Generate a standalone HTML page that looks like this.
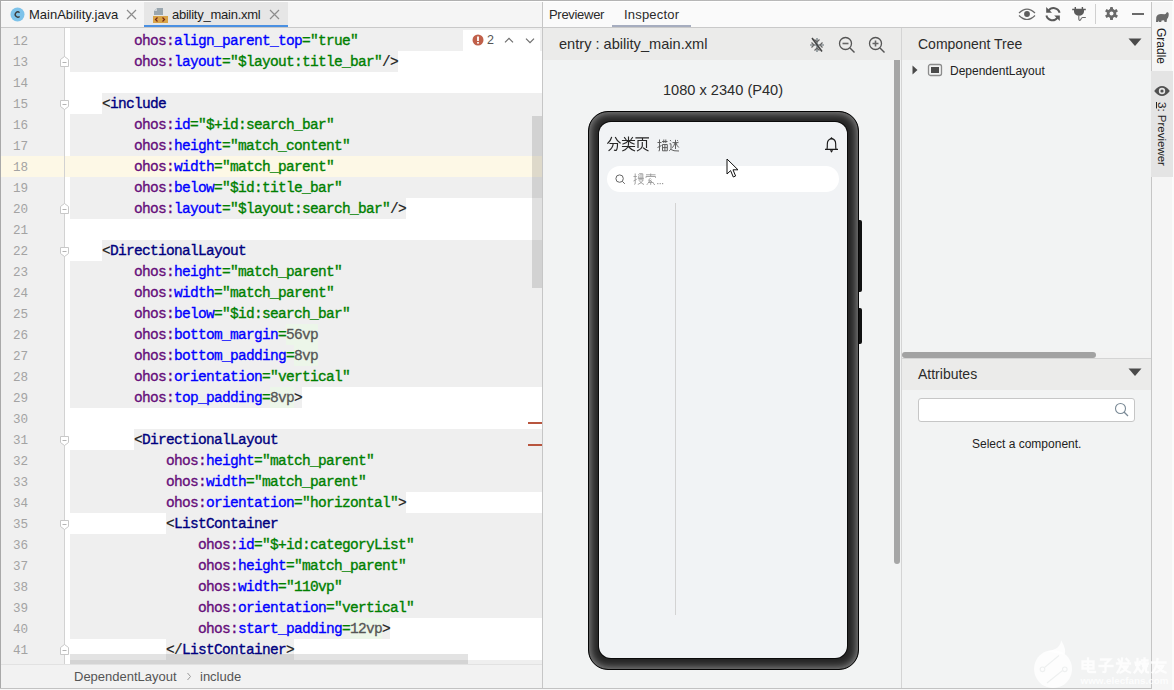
<!DOCTYPE html>
<html><head><meta charset="utf-8">
<style>
*{margin:0;padding:0;box-sizing:border-box}
html,body{width:1174px;height:690px;overflow:hidden;background:#f2f2f2;font-family:"Liberation Sans",sans-serif;color:#222}
.abs{position:absolute}
#root{position:relative;width:1174px;height:690px;overflow:hidden}
/* editor */
.gb{position:absolute;height:21px;background:#efefef}
.cur{position:absolute;left:1px;width:541px;height:21px;background:#fdf8e6}
.nb{position:absolute;height:21px;background:#ecf6e9}
.ln{position:absolute;left:0;width:28px;height:21px;line-height:21px;text-align:right;font-family:"Liberation Mono",monospace;font-size:12.6px;color:#a3a3a3;padding-top:2px}
.cl{position:absolute;left:70px;height:21px;line-height:21px;white-space:pre;font-family:"Liberation Mono",monospace;font-size:14.5px;letter-spacing:-0.7px;font-weight:normal;-webkit-text-stroke:0.35px currentColor;padding-top:1px}
.cl .p{color:#660e7a}
.cl .a{color:#0000ff}
.cl .v{color:#008000}
.cl .t{color:#000080}
.cl .s{color:#222;font-weight:normal;-webkit-text-stroke:0.2px #222}
.cl .n{color:#555;font-weight:normal;-webkit-text-stroke:0.3px #555}
.fold{position:absolute;left:60px}
.ui{font-family:"Liberation Sans",sans-serif;white-space:nowrap;position:absolute}
</style></head>
<body><div id="root">
<!-- outer borders -->

<div class="abs" style="left:0;top:0;width:1px;height:690px;background:#a9a9a9"></div>

<!-- ============ EDITOR ============ -->
<div class="abs" style="left:1px;top:1px;width:541px;height:26px;background:#f5f5f5"></div>
<div class="abs" style="left:144px;top:1px;width:144px;height:26px;background:#e6e6e6"></div>
<div class="abs" style="left:144px;top:25px;width:144px;height:2px;background:#4a90e2"></div>
<div class="abs" style="left:1px;top:27px;width:541px;height:1px;background:#c9c9c9"></div>
<!-- tab 1 -->
<svg class="abs" style="left:10px;top:7px" width="15" height="15" viewBox="0 0 15 15"><circle cx="7.5" cy="7.5" r="7" fill="#7ec3ea"/><path d="M9.6 5.6A2.6 2.6 0 1 0 9.6 9.4" fill="none" stroke="#3a3a3a" stroke-width="1.3"/></svg>
<div class="ui" style="left:29px;top:7px;font-size:13px;color:#1e1e1e">MainAbility.java</div>
<svg class="abs" style="left:126px;top:9px" width="11" height="11" viewBox="0 0 11 11"><path d="M1 1L10 10M10 1L1 10" stroke="#8c8c8c" stroke-width="1.2"/></svg>
<!-- tab 2 -->
<svg class="abs" style="left:152px;top:7px" width="17" height="17" viewBox="0 0 17 17"><path d="M5 1H11V8H2V4Z" fill="#9aa7b0"/><path d="M2 4L5 1V4Z" fill="#d0d6da"/><rect x="1" y="9" width="15" height="7" fill="#d9a448"/><path d="M5.5 10.5L3.5 12.5L5.5 14.5M10.5 10.5L12.5 12.5L10.5 14.5" fill="none" stroke="#7a2a14" stroke-width="1.2"/></svg>
<div class="ui" style="left:172px;top:7px;font-size:13px;color:#1e1e1e;letter-spacing:-0.25px">ability_main.xml</div>
<svg class="abs" style="left:269px;top:9px" width="11" height="11" viewBox="0 0 11 11"><path d="M1 1L10 10M10 1L1 10" stroke="#8c8c8c" stroke-width="1.2"/></svg>

<!-- editor body -->
<div class="abs" style="left:1px;top:28px;width:63px;height:636px;background:#f0f0f0"></div>
<div class="abs" style="left:64px;top:28px;width:1px;height:636px;background:#d2d2d2"></div>
<div class="abs" style="left:65px;top:28px;width:477px;height:636px;background:#ffffff"></div>
<div class="abs" style="left:0;top:28px;width:542px;height:636px;overflow:hidden"><div class="abs" style="left:0;top:-28px;width:542px;height:690px">
<div class="gb" style="top:9px;left:70px;width:472px"></div>
<div class="gb" style="top:30px;left:70px;width:472px"></div>
<div class="gb" style="top:51px;left:70px;width:328px"></div>
<div class="gb" style="top:93px;left:102px;width:440px"></div>
<div class="gb" style="top:114px;left:70px;width:472px"></div>
<div class="gb" style="top:135px;left:70px;width:472px"></div>
<div class="gb" style="top:177px;left:70px;width:472px"></div>
<div class="gb" style="top:198px;left:70px;width:336px"></div>
<div class="gb" style="top:240px;left:102px;width:440px"></div>
<div class="gb" style="top:261px;left:70px;width:472px"></div>
<div class="gb" style="top:282px;left:70px;width:472px"></div>
<div class="gb" style="top:303px;left:70px;width:472px"></div>
<div class="gb" style="top:324px;left:70px;width:472px"></div>
<div class="gb" style="top:345px;left:70px;width:472px"></div>
<div class="gb" style="top:366px;left:70px;width:472px"></div>
<div class="gb" style="top:387px;left:70px;width:232px"></div>
<div class="gb" style="top:429px;left:134px;width:408px"></div>
<div class="gb" style="top:450px;left:70px;width:472px"></div>
<div class="gb" style="top:471px;left:70px;width:472px"></div>
<div class="gb" style="top:492px;left:70px;width:336px"></div>
<div class="gb" style="top:513px;left:166px;width:376px"></div>
<div class="gb" style="top:534px;left:70px;width:472px"></div>
<div class="gb" style="top:555px;left:70px;width:472px"></div>
<div class="gb" style="top:576px;left:70px;width:472px"></div>
<div class="gb" style="top:597px;left:70px;width:472px"></div>
<div class="gb" style="top:618px;left:70px;width:320px"></div>
<div class="gb" style="top:639px;left:166px;width:128px"></div>
<div class="gb" style="top:660px;left:70px;width:472px"></div>
<div class="cur" style="top:156px"></div>
<div class="nb" style="top:324px;left:286px;width:32px"></div>
<div class="nb" style="top:345px;left:294px;width:24px"></div>
<div class="nb" style="top:387px;left:270px;width:24px"></div>
<div class="nb" style="top:618px;left:350px;width:32px"></div>
<div class="ln" style="top:30px">12</div>
<div class="ln" style="top:51px">13</div>
<div class="ln" style="top:72px">14</div>
<div class="ln" style="top:93px">15</div>
<div class="ln" style="top:114px">16</div>
<div class="ln" style="top:135px">17</div>
<div class="ln" style="top:156px">18</div>
<div class="ln" style="top:177px">19</div>
<div class="ln" style="top:198px">20</div>
<div class="ln" style="top:219px">21</div>
<div class="ln" style="top:240px">22</div>
<div class="ln" style="top:261px">23</div>
<div class="ln" style="top:282px">24</div>
<div class="ln" style="top:303px">25</div>
<div class="ln" style="top:324px">26</div>
<div class="ln" style="top:345px">27</div>
<div class="ln" style="top:366px">28</div>
<div class="ln" style="top:387px">29</div>
<div class="ln" style="top:408px">30</div>
<div class="ln" style="top:429px">31</div>
<div class="ln" style="top:450px">32</div>
<div class="ln" style="top:471px">33</div>
<div class="ln" style="top:492px">34</div>
<div class="ln" style="top:513px">35</div>
<div class="ln" style="top:534px">36</div>
<div class="ln" style="top:555px">37</div>
<div class="ln" style="top:576px">38</div>
<div class="ln" style="top:597px">39</div>
<div class="ln" style="top:618px">40</div>
<div class="ln" style="top:639px">41</div>
<div class="cl" style="top:30px">        <span class="p">ohos:</span><span class="a">align_parent_top</span><span class="v">=</span><span class="v">&quot;true&quot;</span></div>
<div class="cl" style="top:51px">        <span class="p">ohos:</span><span class="a">layout</span><span class="v">=</span><span class="v">&quot;$layout:title_bar&quot;</span><span class="s">/&gt;</span></div>
<div class="cl" style="top:93px">    <span class="s">&lt;</span><span class="t">include</span></div>
<div class="cl" style="top:114px">        <span class="p">ohos:</span><span class="a">id</span><span class="v">=</span><span class="v">&quot;$+id:search_bar&quot;</span></div>
<div class="cl" style="top:135px">        <span class="p">ohos:</span><span class="a">height</span><span class="v">=</span><span class="v">&quot;match_content&quot;</span></div>
<div class="cl" style="top:156px">        <span class="p">ohos:</span><span class="a">width</span><span class="v">=</span><span class="v">&quot;match_parent&quot;</span></div>
<div class="cl" style="top:177px">        <span class="p">ohos:</span><span class="a">below</span><span class="v">=</span><span class="v">&quot;$id:title_bar&quot;</span></div>
<div class="cl" style="top:198px">        <span class="p">ohos:</span><span class="a">layout</span><span class="v">=</span><span class="v">&quot;$layout:search_bar&quot;</span><span class="s">/&gt;</span></div>
<div class="cl" style="top:240px">    <span class="s">&lt;</span><span class="t">DirectionalLayout</span></div>
<div class="cl" style="top:261px">        <span class="p">ohos:</span><span class="a">height</span><span class="v">=</span><span class="v">&quot;match_parent&quot;</span></div>
<div class="cl" style="top:282px">        <span class="p">ohos:</span><span class="a">width</span><span class="v">=</span><span class="v">&quot;match_parent&quot;</span></div>
<div class="cl" style="top:303px">        <span class="p">ohos:</span><span class="a">below</span><span class="v">=</span><span class="v">&quot;$id:search_bar&quot;</span></div>
<div class="cl" style="top:324px">        <span class="p">ohos:</span><span class="a">bottom_margin</span><span class="v">=</span><span class="n">56vp</span></div>
<div class="cl" style="top:345px">        <span class="p">ohos:</span><span class="a">bottom_padding</span><span class="v">=</span><span class="n">8vp</span></div>
<div class="cl" style="top:366px">        <span class="p">ohos:</span><span class="a">orientation</span><span class="v">=</span><span class="v">&quot;vertical&quot;</span></div>
<div class="cl" style="top:387px">        <span class="p">ohos:</span><span class="a">top_padding</span><span class="v">=</span><span class="n">8vp</span><span class="s">&gt;</span></div>
<div class="cl" style="top:429px">        <span class="s">&lt;</span><span class="t">DirectionalLayout</span></div>
<div class="cl" style="top:450px">            <span class="p">ohos:</span><span class="a">height</span><span class="v">=</span><span class="v">&quot;match_parent&quot;</span></div>
<div class="cl" style="top:471px">            <span class="p">ohos:</span><span class="a">width</span><span class="v">=</span><span class="v">&quot;match_parent&quot;</span></div>
<div class="cl" style="top:492px">            <span class="p">ohos:</span><span class="a">orientation</span><span class="v">=</span><span class="v">&quot;horizontal&quot;</span><span class="s">&gt;</span></div>
<div class="cl" style="top:513px">            <span class="s">&lt;</span><span class="t">ListContainer</span></div>
<div class="cl" style="top:534px">                <span class="p">ohos:</span><span class="a">id</span><span class="v">=</span><span class="v">&quot;$+id:categoryList&quot;</span></div>
<div class="cl" style="top:555px">                <span class="p">ohos:</span><span class="a">height</span><span class="v">=</span><span class="v">&quot;match_parent&quot;</span></div>
<div class="cl" style="top:576px">                <span class="p">ohos:</span><span class="a">width</span><span class="v">=</span><span class="v">&quot;110vp&quot;</span></div>
<div class="cl" style="top:597px">                <span class="p">ohos:</span><span class="a">orientation</span><span class="v">=</span><span class="v">&quot;vertical&quot;</span></div>
<div class="cl" style="top:618px">                <span class="p">ohos:</span><span class="a">start_padding</span><span class="v">=</span><span class="n">12vp</span><span class="s">&gt;</span></div>
<div class="cl" style="top:639px">            <span class="s">&lt;/</span><span class="t">ListContainer</span><span class="s">&gt;</span></div>
<div class="abs" style="left:64px;top:28px;width:1px;height:636px;background:#d2d2d2"></div>
<svg class="fold" style="top:56px" width="10" height="12" viewBox="0 0 10 12"><path d="M0.5 10.5H8.5V3.5L4.5 0.5L0.5 3.5Z" fill="#fff" stroke="#c8c8c8"/><path d="M2.5 6.5H6.5" stroke="#b4b4b4"/></svg>
<svg class="fold" style="top:100px" width="10" height="12" viewBox="0 0 10 12"><path d="M0.5 0.5H8.5V6.5L4.5 9.5L0.5 6.5Z" fill="#fff" stroke="#c8c8c8"/><path d="M2.5 4.5H6.5" stroke="#b4b4b4"/></svg>
<svg class="fold" style="top:203px" width="10" height="12" viewBox="0 0 10 12"><path d="M0.5 10.5H8.5V3.5L4.5 0.5L0.5 3.5Z" fill="#fff" stroke="#c8c8c8"/><path d="M2.5 6.5H6.5" stroke="#b4b4b4"/></svg>
<svg class="fold" style="top:247px" width="10" height="12" viewBox="0 0 10 12"><path d="M0.5 0.5H8.5V6.5L4.5 9.5L0.5 6.5Z" fill="#fff" stroke="#c8c8c8"/><path d="M2.5 4.5H6.5" stroke="#b4b4b4"/></svg>
<svg class="fold" style="top:436px" width="10" height="12" viewBox="0 0 10 12"><path d="M0.5 0.5H8.5V6.5L4.5 9.5L0.5 6.5Z" fill="#fff" stroke="#c8c8c8"/><path d="M2.5 4.5H6.5" stroke="#b4b4b4"/></svg>
<svg class="fold" style="top:520px" width="10" height="12" viewBox="0 0 10 12"><path d="M0.5 0.5H8.5V6.5L4.5 9.5L0.5 6.5Z" fill="#fff" stroke="#c8c8c8"/><path d="M2.5 4.5H6.5" stroke="#b4b4b4"/></svg>
<svg class="fold" style="top:644px" width="10" height="12" viewBox="0 0 10 12"><path d="M0.5 10.5H8.5V3.5L4.5 0.5L0.5 3.5Z" fill="#fff" stroke="#c8c8c8"/><path d="M2.5 6.5H6.5" stroke="#b4b4b4"/></svg>
</div></div>
<!-- error widget -->
<div class="abs" style="left:463px;top:30px;width:77px;height:21px;background:#ffffff"></div>
<svg class="abs" style="left:472px;top:34px" width="12" height="12" viewBox="0 0 12 12"><circle cx="6" cy="6" r="5.5" fill="#c0604a"/><rect x="5.1" y="2.5" width="1.8" height="4.5" fill="#fff"/><rect x="5.1" y="8" width="1.8" height="1.6" fill="#fff"/></svg>
<div class="ui" style="left:487px;top:33px;font-size:12.5px;color:#555">2</div>
<svg class="abs" style="left:503px;top:36px" width="12" height="8" viewBox="0 0 12 8"><path d="M2 6.3L6 2.3L10 6.3" fill="none" stroke="#6e6e6e" stroke-width="1.2"/></svg>
<svg class="abs" style="left:524px;top:37px" width="12" height="8" viewBox="0 0 12 8"><path d="M2 1.7L6 5.7L10 1.7" fill="none" stroke="#6e6e6e" stroke-width="1.2"/></svg>
<!-- vertical scrollbar -->
<div class="abs" style="left:532px;top:116px;width:10px;height:172px;background:rgba(0,0,0,0.12)"></div>
<!-- error stripes -->
<div class="abs" style="left:528px;top:422px;width:14px;height:2px;background:#b8553e"></div>
<div class="abs" style="left:528px;top:444px;width:14px;height:2px;background:#b8553e"></div>
<!-- horizontal scrollbar -->
<div class="abs" style="left:70px;top:654px;width:398px;height:10px;background:rgba(0,0,0,0.11)"></div>
<!-- breadcrumb -->
<div class="abs" style="left:1px;top:664px;width:541px;height:1px;background:#e2e2e2"></div>
<div class="abs" style="left:1px;top:665px;width:541px;height:23px;background:#f2f2f2"></div>
<div class="ui" style="left:74px;top:669px;font-size:13px;color:#555">DependentLayout</div>
<svg class="abs" style="left:186px;top:672px" width="6" height="9" viewBox="0 0 6 9"><path d="M1.5 1L4.5 4.5L1.5 8" fill="none" stroke="#9a9a9a" stroke-width="1"/></svg>
<div class="ui" style="left:200px;top:669px;font-size:13px;color:#555">include</div>
<div class="abs" style="left:0;top:688px;width:1152px;height:1px;background:#c2c2c2"></div>
<div class="abs" style="left:0;top:689px;width:1174px;height:1px;background:#f7f7f7"></div>

<!-- divider editor/previewer -->
<div class="abs" style="left:542px;top:0;width:1px;height:688px;background:#c6c6c6"></div>

<!-- ============ PREVIEWER ============ -->
<div class="abs" style="left:543px;top:1px;width:608px;height:26px;background:#fafafa"></div>
<div class="abs" style="left:543px;top:27px;width:608px;height:1px;background:#c9c9c9"></div>
<div class="ui" style="left:549px;top:7px;font-size:13px;color:#2a2a2a;letter-spacing:-0.3px">Previewer</div>
<div class="ui" style="left:624px;top:7px;font-size:13px;color:#2a2a2a;letter-spacing:0.2px">Inspector</div>
<div class="abs" style="left:612px;top:25px;width:79px;height:2px;background:#a6adbf"></div>
<!-- right top icons -->
<svg class="abs" style="left:1017px;top:6px" width="20" height="16" viewBox="0 0 20 16"><path d="M2 7Q10 -1 18 7M2 9.5Q10 17.5 18 9.5" fill="none" stroke="#6a6a6a" stroke-width="1.2"/><circle cx="10" cy="8" r="2.9" fill="#5e5e5e"/></svg>
<svg class="abs" style="left:1044px;top:5px" width="18" height="18" viewBox="0 0 18 18"><g fill="none" stroke="#5a5a5a" stroke-width="2"><path d="M4.5 5.8A6.2 6.2 0 0 1 15.6 7.8"/><path d="M2.4 10.6A6.2 6.2 0 0 0 13.5 12.6"/></g><g fill="#5a5a5a"><path d="M2.2 2V7.8H8Z"/><path d="M15.8 16V10.4H10.2Z"/></g></svg>
<svg class="abs" style="left:1071px;top:5px" width="16" height="17" viewBox="0 0 16 17"><g stroke="#5a5a5a" stroke-width="1.4" fill="none"><path d="M1.2 4.5H14.8M4.3 2V4.5M11.4 2V4.5"/></g><path d="M3 4.5H13V6.5A5 4.3 0 0 1 3 6.5Z" fill="#5a5a5a"/><path d="M7.8 10.5V14Q8 16 9.5 15Q10.5 12.5 11.5 12.5H14.8" fill="none" stroke="#6a6a6a" stroke-width="1.1"/></svg>
<div class="abs" style="left:1095px;top:4px;width:1px;height:20px;background:#d0d0d0"></div>
<svg class="abs" style="left:1104px;top:6px" width="15" height="15" viewBox="0 0 16 16"><g fill="#6a6a6a"><circle cx="8" cy="8" r="5"/><rect x="6.4" y="1" width="3.2" height="14" rx="0.5"/><rect x="6.4" y="1" width="3.2" height="14" rx="0.5" transform="rotate(60 8 8)"/><rect x="6.4" y="1" width="3.2" height="14" rx="0.5" transform="rotate(120 8 8)"/></g><circle cx="8" cy="8" r="2.1" fill="#fafafa"/></svg>
<div class="abs" style="left:1132px;top:13px;width:12px;height:2px;background:#6a6a6a"></div>

<!-- toolbar -->
<div class="abs" style="left:543px;top:28px;width:358px;height:32px;background:#ebebea"></div>
<div class="ui" style="left:559px;top:36px;font-size:14.6px;color:#2b2b2b">entry : ability_main.xml</div>
<svg class="abs" style="left:807px;top:35px" width="20" height="20" viewBox="0 0 20 20"><path d="M10 3V17M3 10H17" stroke="#8e979b" stroke-width="1.7"/><g fill="none" stroke="#666" stroke-width="1.2"><path d="M7.5 4.5L10 7L12.5 4.5M7.5 15.5L10 13L12.5 15.5M4.5 7.5L7 10L4.5 12.5M15.5 7.5L13 10L15.5 12.5"/></g><path d="M5 3L15 16.5" stroke="#454545" stroke-width="1.6"/></svg>
<svg class="abs" style="left:838px;top:36px" width="18" height="18" viewBox="0 0 18 18"><circle cx="7.5" cy="7.5" r="6" fill="none" stroke="#555" stroke-width="1.3"/><path d="M12 12L16.5 16.5" stroke="#555" stroke-width="1.4"/><path d="M4.5 7.5H10.5" stroke="#666" stroke-width="1.6"/></svg>
<svg class="abs" style="left:868px;top:36px" width="18" height="18" viewBox="0 0 18 18"><circle cx="7.5" cy="7.5" r="6" fill="none" stroke="#555" stroke-width="1.3"/><path d="M12 12L16.5 16.5" stroke="#555" stroke-width="1.4"/><path d="M4.5 7.5H10.5M7.5 4.5V10.5" stroke="#666" stroke-width="1.6"/></svg>

<!-- preview content -->
<div class="abs" style="left:543px;top:60px;width:358px;height:628px;background:#f2f3f3"></div>
<div class="abs" style="left:894px;top:60px;width:6px;height:504px;background:#a6a6a6;border-radius:0 0 3px 3px"></div>
<div class="ui" style="left:663px;top:82px;font-size:14.6px;color:#2b2b2b">1080 x 2340 (P40)</div>

<!-- phone -->
<div class="abs" style="left:858px;top:220px;width:4px;height:72px;background:#111;border-radius:0 2px 2px 0"></div>
<div class="abs" style="left:858px;top:308px;width:4px;height:36px;background:#111;border-radius:0 2px 2px 0"></div>
<div class="abs" style="left:588px;top:111px;width:271px;height:559px;border-radius:20px;background:#252525;border:1px solid #050505;box-shadow:inset 0 0 8px 1px rgba(150,150,150,1)"></div>
<div class="abs" style="left:599px;top:122px;width:248px;height:536px;border-radius:12px;background:#f1f3f5;box-shadow:0 0 0 1px #0a0a0a"></div>
<!-- screen content -->
<svg class="abs" style="left:607px;top:136px" width="42" height="16" viewBox="0 0 42 16">
 <g fill="none" stroke="#262626" stroke-width="1.15" stroke-linecap="square">
  <!-- 分 -->
  <path d="M4.5 1.5Q3.5 5 0.8 7.2M8.5 1.5Q10 5 13.2 7"/>
  <path d="M3 7.5H10.5Q10.5 12.5 9.5 14Q8.8 14.6 7.5 14.2"/>
  <path d="M6.2 7.8Q5.8 12 2 14.5"/>
  <!-- 类 -->
  <path d="M15.5 4.5H27.5M21.5 1V8M17.5 1.5L19 3.5M25.5 1.5L24 3.5M21 5Q19.5 7 16 8M22 5Q23.5 7 27 8"/>
  <path d="M15.5 10.5H27.5M21.5 8.5Q21 13 15.8 14.8M21.8 11Q24 13.5 27.5 14.8"/>
  <!-- 页 -->
  <path d="M29 1.8H41.5M35.5 2V4.3"/>
  <path d="M31 4.5H39.5V11.5M31 4.5V11.5M35.3 6.5V10Q35 12.5 30.5 14.8M36.5 12Q38.5 13.5 41 14.8"/>
 </g>
</svg>
<svg class="abs" style="left:657px;top:139px" width="23" height="13" viewBox="0 0 23 13">
 <g fill="none" stroke="#5a5a5a" stroke-width="0.95">
  <!-- 描 -->
  <path d="M0.5 3.5H4.5M2.5 0.5V11.5Q2.5 12.3 1.5 11.8M0.5 8.5L4.5 6.5"/>
  <path d="M5 2.5H10.5M6.8 0.5V4M8.8 0.5V4M5.5 5.5H10.3V11.8H5.5ZM5.5 8.6H10.3M7.9 5.5V11.8"/>
  <!-- 述 -->
  <path d="M13 1L14 2.2M12.5 4.8H14V10Q13.2 11.2 12.2 11.8M14 10.5Q16 12.2 22 12"/>
  <path d="M15.5 3.6H21.5M18.5 0.8V10M18 4Q17 7 15.2 8.8M19 4Q20 7 21.8 8.5M20.3 1.2L21 2.2"/>
 </g>
</svg>
<svg class="abs" style="left:824px;top:136px" width="16" height="18" viewBox="0 0 16 18"><path d="M5.8 3L7.5 1L9.2 3Z" fill="#1a1a1a"/><path d="M3 13.4Q3.4 11 3.3 8.3Q3.3 2.9 7.5 2.9Q11.7 2.9 11.7 8.3Q11.6 11 12 13.4M1 13.4H14" fill="none" stroke="#1a1a1a" stroke-width="1.15"/><path d="M5.8 14.2H9.2L7.5 16.8Z" fill="#1a1a1a"/></svg>
<div class="abs" style="left:607px;top:166px;width:232px;height:26px;border-radius:13px;background:#ffffff"></div>
<svg class="abs" style="left:615px;top:174px" width="11" height="11" viewBox="0 0 11 11"><circle cx="4.6" cy="4.6" r="3.7" fill="none" stroke="#666" stroke-width="1"/><path d="M7.3 7.3L9.8 9.8" stroke="#666" stroke-width="1"/></svg>
<svg class="abs" style="left:633px;top:173px" width="31" height="12" viewBox="0 0 31 12">
 <g fill="none" stroke="#9a9a9a" stroke-width="0.9">
  <!-- 搜 -->
  <path d="M0.5 3.5H3.8M2.2 0.5V10.8Q2.2 11.5 1.3 11.2M0.5 8L3.8 6.2"/>
  <path d="M5 1.5L6.5 2.5M6 0.8H9.8V5.3H5.8V3M8 0.5V5.5M4.8 5.3H11"/>
  <path d="M5.5 6.8H10.3Q9 10 4.8 11.5M6.2 7.5Q8 10.5 11 11.5"/>
  <!-- 索 -->
  <path d="M13 1.8H22.5M17.7 0.5V3.2M13 4.8V3.5H22.5V4.8M17.5 5L15.5 7.3L19 8.7M18.5 6.8L15 9.5H20.5M17.7 9.2V11.8M15.3 10.3L13.5 11.8M20 10.3L22 11.8"/>
 </g>
 <g fill="#9a9a9a"><rect x="24.2" y="10" width="1.2" height="1.2"/><rect x="26.6" y="10" width="1.2" height="1.2"/><rect x="29" y="10" width="1.2" height="1.2"/></g>
</svg>
<div class="abs" style="left:675px;top:203px;width:1px;height:412px;background:#d3d3d3"></div>
<!-- cursor -->
<svg class="abs" style="left:726px;top:158px" width="14" height="21" viewBox="0 0 14 21"><path d="M1 1V16L4.6 12.6L7.3 19L9.6 18L7 11.8H12Z" fill="#fff" stroke="#111" stroke-width="1" stroke-linejoin="round"/></svg>

<!-- divider previewer/right panel -->
<div class="abs" style="left:901px;top:28px;width:1px;height:660px;background:#d4d4d4"></div>

<!-- ============ RIGHT PANEL ============ -->
<div class="abs" style="left:902px;top:28px;width:249px;height:32px;background:#ebebea"></div>
<div class="ui" style="left:918px;top:36px;font-size:14px;color:#2b2b2b">Component Tree</div>
<svg class="abs" style="left:1128px;top:38px" width="14" height="9" viewBox="0 0 14 9"><path d="M0.5 0.5H13.5L7 8Z" fill="#4a4a4a"/></svg>
<div class="abs" style="left:902px;top:60px;width:249px;height:292px;background:#f2f3f3"></div>
<svg class="abs" style="left:911px;top:64px" width="8" height="12" viewBox="0 0 8 12"><path d="M1.5 1.5L6.5 6L1.5 10.5Z" fill="#4a4a4a"/></svg>
<svg class="abs" style="left:927px;top:63px" width="16" height="14" viewBox="0 0 16 14"><rect x="1.5" y="1.5" width="13" height="11" rx="2" fill="none" stroke="#8c8c8c" stroke-width="1.3"/><rect x="4" y="4" width="8" height="6" fill="#4a4a4a"/></svg>
<div class="ui" style="left:950px;top:64px;font-size:12px;color:#222">DependentLayout</div>
<div class="abs" style="left:902px;top:352px;width:194px;height:6px;border-radius:3px;background:#a2a2a2"></div>
<div class="abs" style="left:902px;top:358px;width:249px;height:1px;background:#d4d4d4"></div>
<div class="abs" style="left:902px;top:359px;width:249px;height:31px;background:#ebebea"></div>
<div class="ui" style="left:918px;top:366px;font-size:14px;color:#2b2b2b">Attributes</div>
<svg class="abs" style="left:1128px;top:368px" width="14" height="9" viewBox="0 0 14 9"><path d="M0.5 0.5H13.5L7 8Z" fill="#4a4a4a"/></svg>
<div class="abs" style="left:902px;top:390px;width:249px;height:298px;background:#f2f3f3"></div>
<div class="abs" style="left:918px;top:398px;width:217px;height:24px;border-radius:3px;background:#fff;border:1px solid #c6c6c6"></div>
<svg class="abs" style="left:1113px;top:401px" width="17" height="17" viewBox="0 0 17 17"><circle cx="7.5" cy="7.5" r="5" fill="none" stroke="#7a8a96" stroke-width="1.1"/><path d="M11 11L15 15" stroke="#7a8a96" stroke-width="1.2"/></svg>
<div class="ui" style="left:972px;top:437px;font-size:12px;color:#222">Select a component.</div>
<div class="abs" style="left:1151px;top:0;width:1px;height:689px;background:#c6c6c6"></div>

<!-- ============ RIGHT SIDEBAR ============ -->
<div class="abs" style="left:1152px;top:1px;width:20px;height:689px;background:#f5f5f5"></div>

<div class="abs" style="left:1172px;top:0;width:2px;height:690px;background:#fbfbfb"></div>
<div class="abs" style="left:1151px;top:71px;width:22px;height:106px;background:#e4e4e4"></div>
<div class="abs" style="left:0;top:0;width:1173px;height:1px;background:linear-gradient(90deg,#a9a9a9,#b3b3b3 50%,#c4c4c4)"></div>
<div class="abs" style="left:1px;top:1px;width:1172px;height:1px;background:#ffffff"></div>
<svg class="abs" style="left:1153px;top:10px" width="18" height="14" viewBox="0 0 18 14"><path d="M3 12L3.3 7Q4.3 4 8 4L11.8 4.3Q13.2 4 13.3 2.8Q13.8 1.8 15 2.3Q16.2 3.3 15.6 6Q15 8.3 14 9L13.6 12H11.6L11 10.2L8.6 10.6L8.2 12H6.2L5.8 10.5L5.2 12Z" fill="#6a6a6a"/></svg>
<div class="ui" style="left:1153px;top:28px;width:18px;height:40px;font-size:12px;color:#222"><div style="position:absolute;left:15px;top:0;transform-origin:0 0;transform:rotate(90deg)">Gradle</div></div>
<svg class="abs" style="left:1153px;top:84px" width="18" height="14" viewBox="0 0 18 14"><path d="M1.2 7Q5 2 9 2Q13 2 16.8 7Q13 12 9 12Q5 12 1.2 7Z" fill="#505050"/><circle cx="9" cy="7" r="3.2" fill="#e4e4e4"/><circle cx="9" cy="7" r="1.6" fill="#505050"/></svg>
<div class="ui" style="left:1153px;top:102px;width:18px;height:66px;font-size:11.5px;color:#222"><div style="position:absolute;left:15px;top:0;transform-origin:0 0;transform:rotate(90deg)"><u>3</u>: Previewer</div></div>
<!-- watermark -->
<svg class="abs" style="left:1030px;top:636px" width="144" height="54" viewBox="1030 636 144 54">
 <g fill="#ffffff" fill-opacity="0.8">
  <path d="M1053 650A19 19 0 1 0 1053.1 650Z"/>
  <path d="M1047 651.5Q1061 649 1061 640Q1067 650 1064.5 655Z"/>
 </g>
 <g fill="none" stroke="#eef0f0" stroke-width="1.1">
  <path d="M1044.5 667.5L1059 655.5M1062.5 670.5L1047 683"/>
  <circle cx="1042.5" cy="669.3" r="2.3"/><circle cx="1064.8" cy="669.3" r="2.3"/>
 </g>
 <g fill="none" stroke="#ffffff" stroke-opacity="0.8" stroke-width="2.3" stroke-linecap="square">
  <g transform="translate(1080.5 657.5)"><path d="M2 4H13V11H2ZM2 7.5H13M7.5 1V13Q7.5 14.5 9.5 14.5H14.5"/></g>
  <g transform="translate(1098 657.5)"><path d="M3 2H12L8 6M7.5 6V13.5Q7.5 15 5.5 14.5M1.5 8.5H14.5"/></g>
  <g transform="translate(1115.5 657.5)"><path d="M3 2L4.5 4.5M1.5 6H14.5M6.5 1Q6 9 2 15M6 9H12Q10 13 5 15M8 10Q10 13.5 14.5 15M11 1.5L13 3.5"/></g>
  <g transform="translate(1133 657.5)"><path d="M2.5 5L3 7.5M7 4.5L6.3 7.5M4.5 1.5V9Q4 13 1.5 15M4.5 9Q6 12 7.5 14M9 3H14.5M11.5 1V6M9 6H15M10 8.5H14M11 8.5Q11 13 8.5 15M13 8.5V13.5Q13 14.8 15 14.8"/></g>
  <g transform="translate(1150.5 657.5)"><path d="M1.5 5H15M7 1.5Q6.5 10 2 15M6 8.5H12.5Q10.5 13 5.5 15M8 10Q10.5 13.5 15 15"/></g>
 </g>
 <text x="1080.5" y="683.5" textLength="88" lengthAdjust="spacingAndGlyphs" font-family="Liberation Sans" font-weight="bold" font-size="9.5" fill="#ffffff" fill-opacity="0.8">www.elecfans.com</text>
</svg>
</div></body></html>
